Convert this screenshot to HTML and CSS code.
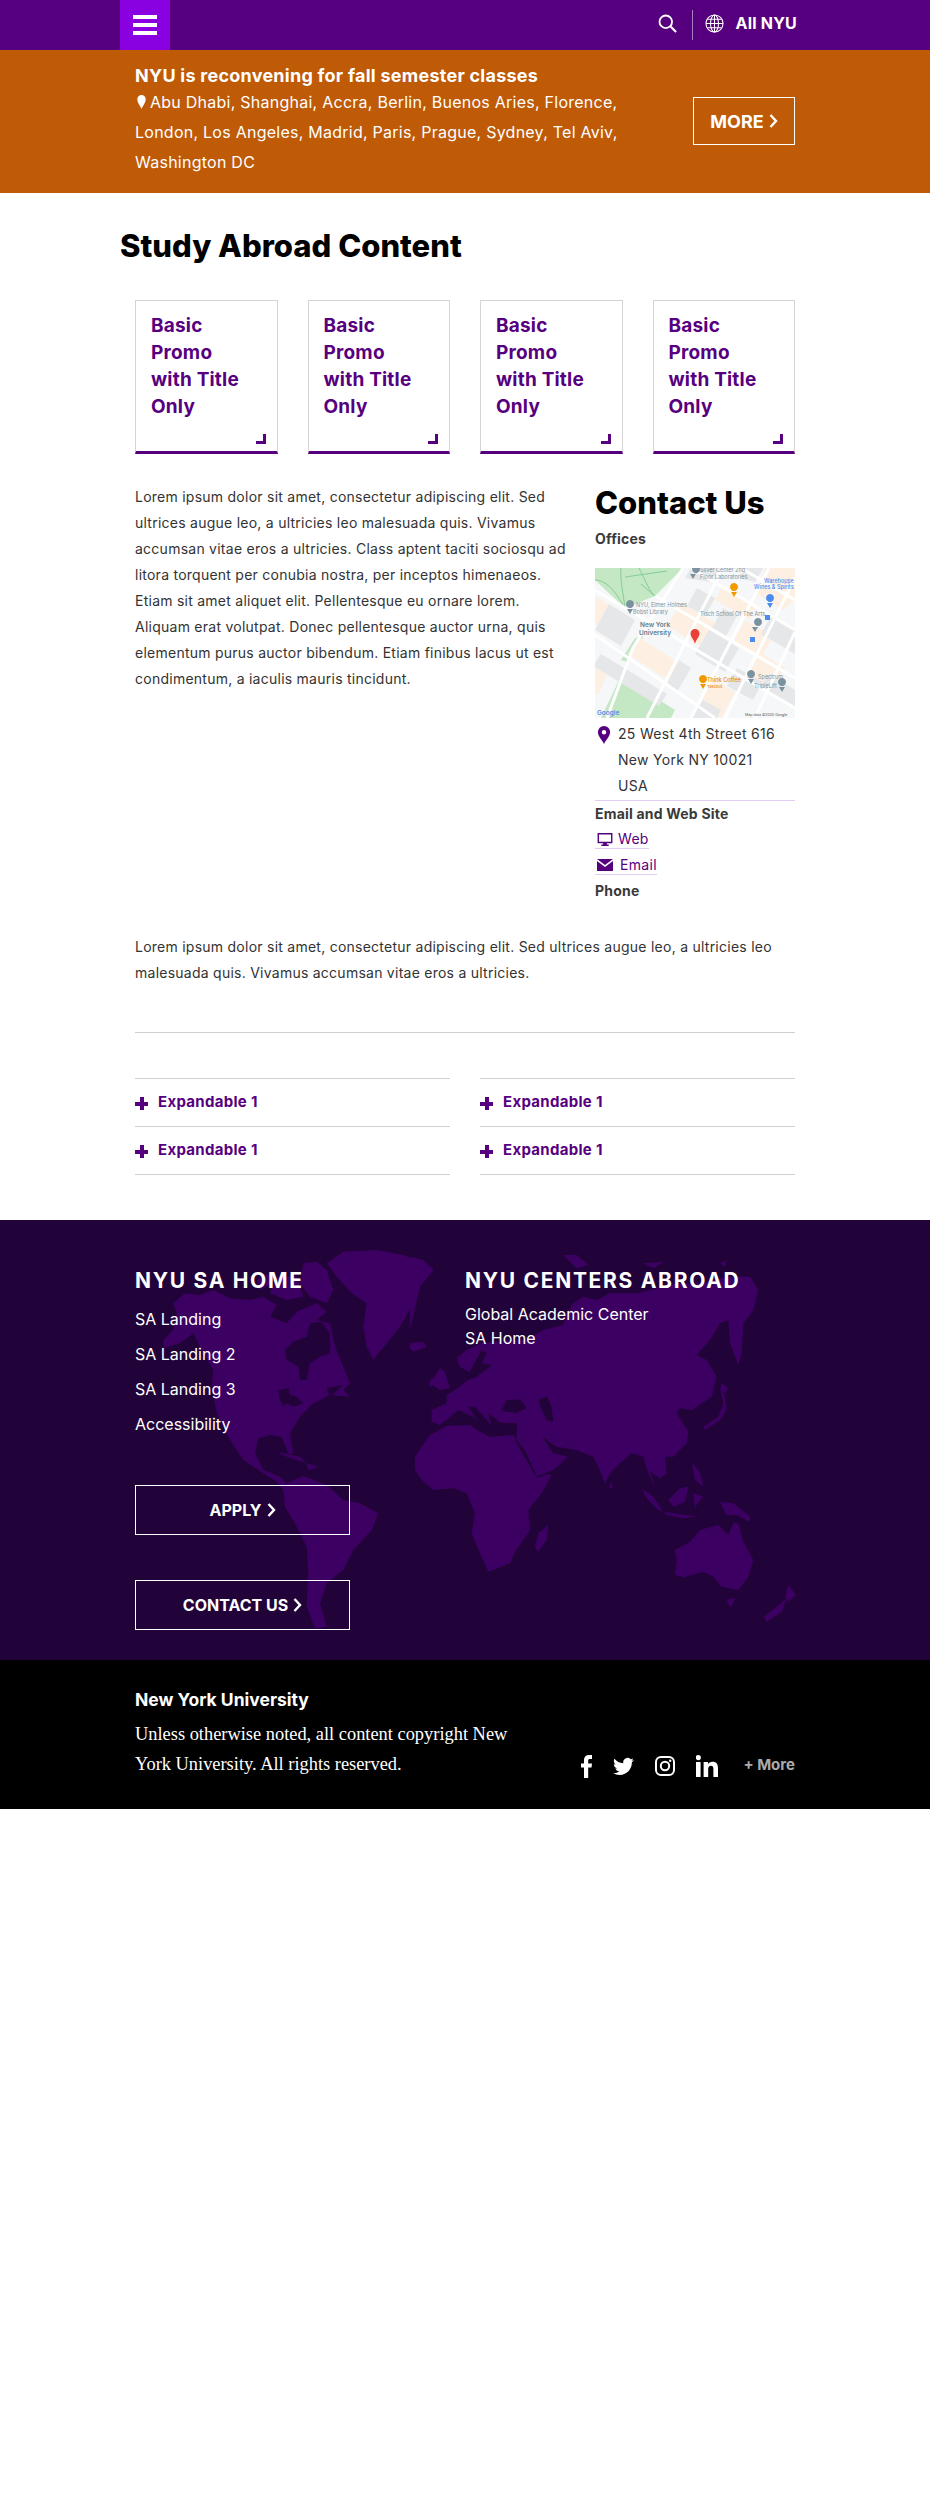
FILE: index.html
```html
<!DOCTYPE html>
<html lang="en">
<head>
<meta charset="utf-8">
<title>Study Abroad Content</title>
<link rel="stylesheet" href="styles.css">
</head>
<body>
<header class="topbar">
  <button class="menu-btn" aria-label="Menu"><span></span><span></span><span></span></button>
  <div class="top-right">
    <svg class="ico-search" viewBox="0 0 20 20"><circle cx="8.200" cy="8.200" r="6.600" fill="none" stroke="#fff" stroke-width="1.900"/><path d="M13 13l6 6" stroke="#fff" stroke-width="2.200" fill="none"/></svg>
    <span class="top-div"></span>
    <svg class="ico-globe" viewBox="0 0 20 20" fill="none" stroke="#fff" stroke-width="1.100"><circle cx="10" cy="10" r="9"/><ellipse cx="10" cy="10" rx="4.200" ry="9"/><path d="M10 1v18M1 10h18M2.400 5.500h15.200M2.400 14.500h15.200"/></svg>
    <span class="all-nyu">All NYU</span>
  </div>
</header>

<section class="alert">
  <div class="alert-text">
    <h2 class="alert-title">NYU is reconvening for fall semester classes</h2>
    <p class="alert-body"><svg class="alert-pin" viewBox="0 0 10 16"><path d="M5 0a4.800 4.800 0 0 0-4.800 4.900C.2 8.300 3.600 12.800 5 16c1.400-3.200 4.800-7.700 4.800-11.100A4.800 4.800 0 0 0 5 0z" fill="#fff"/></svg>Abu Dhabi, Shanghai, Accra, Berlin, Buenos Aries, Florence,<br>London, Los Angeles, Madrid, Paris, Prague, Sydney, Tel Aviv,<br>Washington DC</p>
  </div>
  <a class="btn more-btn">MORE <svg class="chev" viewBox="0 0 9 14"><path d="M1.500 1l5.500 6-5.500 6" fill="none" stroke="#fff" stroke-width="2.400"/></svg></a>
</section>

<main class="page">
  <h1 class="page-title">Study Abroad Content</h1>

  <div class="cards">
    <a class="card"><span class="card-title">Basic<br>Promo<br>with Title<br>Only</span><i class="corner"></i></a>
    <a class="card"><span class="card-title">Basic<br>Promo<br>with Title<br>Only</span><i class="corner"></i></a>
    <a class="card"><span class="card-title">Basic<br>Promo<br>with Title<br>Only</span><i class="corner"></i></a>
    <a class="card"><span class="card-title">Basic<br>Promo<br>with Title<br>Only</span><i class="corner"></i></a>
  </div>

  <div class="content-row">
    <p class="para">Lorem ipsum dolor sit amet, consectetur adipiscing elit. Sed<br>ultrices augue leo, a ultricies leo malesuada quis. Vivamus<br>accumsan vitae eros a ultricies. Class aptent taciti sociosqu ad<br>litora torquent per conubia nostra, per inceptos himenaeos.<br>Etiam sit amet aliquet elit. Pellentesque eu ornare lorem.<br>Aliquam erat volutpat. Donec pellentesque auctor urna, quis<br>elementum purus auctor bibendum. Etiam finibus lacus ut est<br>condimentum, a iaculis mauris tincidunt.</p>
    <aside class="contact">
      <h2 class="contact-title">Contact Us</h2>
      <h3 class="contact-label offices">Offices</h3>
      <svg class="map" viewBox="0 0 200 150">
        <rect width="200" height="150" fill="#f6f7f8"/>
        <path d="M0 0H88L60 28 30 40 0 12z" fill="#c4e8c4"/>
        <path d="M48 68l-2 8-14 18-6-2 14-22z" fill="#c4e8c4"/>
        <path d="M6 150l20-42 54 34-4 8z" fill="#c4e8c4"/>
        <path d="M0 12c14 0 24 18 30 28M44 0c6 12 12 26 16 28M30 9l42-6M26 0c-1 12 2 24 4 40M46 16l14 12" fill="none" stroke="#7fc88f" stroke-width=".9"/>
        <g fill="#fdf0e2">
          <path d="M0 28l14 8-10 20H0z"/><path d="M45 70l44 28-10 18-46-30z"/><path d="M86 34l36 22-14 24-36-22z"/><path d="M128 18l34 20-8 14-34-20z"/>
          <path d="M150 52l28 16-12 22-28-16z"/><path d="M170 0h30v32l-12 10-26-16z"/><path d="M116 110l24 14-14 26h-26z"/><path d="M164 84l26 16-14 24-26-16z"/><path d="M0 100l12 6-8 20H0z"/>
        </g>
        <g fill="#e6e7e9">
          <path d="M14 36l26 16-14 26-26-16z"/><path d="M96 0h28l-8 14-26-4z"/><path d="M102 20l18 10-10 18-18-10z"/><path d="M128 40l14 8-12 22-14-8z"/>
          <path d="M114 62l30 18-14 24-30-18z"/><path d="M150 0h18l-8 14-16-4z"/><path d="M6 86l66 40-8 12-66-40z"/><path d="M84 92l12 8-14 24-10-8z"/>
          <path d="M142 100l26 14-10 18-26-14z"/><path d="M174 106l26 16v18l-36-20z"/><path d="M108 132l18 10-4 8H96z"/><path d="M176 48l24 14v24l-34-20z"/>
        </g>
        <g fill="none" stroke="#fff" stroke-width="3">
          <path d="M-4 20L210 146M-4 64L120 150M60 28L200 110M96 0L200 62M146 0L200 32"/>
          <path d="M88 0L38 80 12 150M128 0L52 150M174 0L96 150M200 10L130 150M200 64L160 150"/>
        </g>
        <g fill="#7b93a0" font-family="Inter, sans-serif">
          <path d="M31 36a4 4 0 1 1 0 .1zM35 46l-3-5h6z"/>
          <path d="M97 1a4 4 0 1 1 0 .1zM98 11l-3-5h6z"/>
          <path d="M159 54a4 4 0 1 1 0 .1zM160 64l-3-5h6z"/>
          <path d="M152 106a4 4 0 1 1 0 .1zM156 116l-3-5h6z"/>
          <path d="M183 114a4 4 0 1 1 0 .1zM187 124l-3-5h6z"/>
          <text x="105" y="4" font-size="5.500">Silver Center 2nd</text>
          <text x="105" y="11" font-size="5.500">Floor Laboratories</text>
          <text x="41" y="39" font-size="5.500">NYU, Elmer Holmes</text>
          <text x="38" y="46" font-size="5.500">Bobst Library</text>
          <text x="105" y="48" font-size="5.500">Tisch School Of The Arts</text>
          <text x="163" y="111" font-size="5.500">Spectrum</text>
          <text x="159" y="120" font-size="5.500">TripleLift</text>
          <text x="45" y="59" font-size="6.500" font-weight="600" fill="#5f7d8d">New York</text>
          <text x="44" y="67" font-size="6.500" font-weight="600" fill="#5f7d8d">University</text>
        </g>
        <g fill="#4a8cf0" font-family="Inter, sans-serif" font-size="5.500" font-weight="500">
          <text x="169" y="15">Warehouse</text>
          <text x="159" y="21">Wines &amp; Spirits</text>
          <path d="M171 30a4 4 0 1 1 0 .1zM175 40l-3-5h6z"/>
          <rect x="170" y="47" width="5" height="5"/>
          <rect x="155" y="69" width="5" height="5"/>
        </g>
        <g fill="#f29900" font-family="Inter, sans-serif" font-size="5.500" font-weight="500">
          <path d="M135 19a4 4 0 1 1 0 .1zM139 29l-3-5h6z"/>
          <path d="M104 111a4 4 0 1 1 0 .1zM108 121l-3-5h6z"/>
          <text x="112" y="114" fill="#e8890c">Think Coffee</text>
          <text x="112" y="120" font-size="4" fill="#e8890c">Takeout</text>
        </g>
        <path d="M100 61a4.500 4.500 0 0 0-4.500 4.500c0 3.500 3 5 4.500 10.500 1.500-5.500 4.500-7 4.500-10.500A4.500 4.500 0 0 0 100 61z" fill="#e8403a"/>
        <text x="2" y="147" font-size="6.500" font-weight="600" fill="#5a8ee8" font-family="Inter, sans-serif">Google</text>
        <text x="150" y="148" font-size="3.600" fill="#555" font-family="Inter, sans-serif">Map data ©2020 Google</text>
      </svg>
      <div class="address">
        <svg class="addr-pin" viewBox="0 0 12 16"><path fill-rule="evenodd" d="M6 0a5.400 5.400 0 0 0-5.400 5.500C.6 9 4.500 12.500 6 16c1.500-3.500 5.400-7 5.400-10.500A5.400 5.400 0 0 0 6 0zm0 3.600a2 2 0 1 1 0 4 2 2 0 0 1 0-4z" fill="#57007f"/></svg>
        <p>25 West 4th Street 616<br>New York NY 10021<br>USA</p>
      </div>
      <h3 class="contact-label">Email and Web Site</h3>
      <a class="contact-link web"><svg class="link-ico" viewBox="0 0 16 14"><path fill="#57007f" d="M0 0h16v11H10v1.500h2V14H4v-1.500h2V11H0zm1.500 1.500v8h13v-8z"/></svg>Web</a>
      <a class="contact-link mail"><svg class="link-ico" viewBox="0 0 16 12"><path fill="#57007f" d="M0 0h16L8 6zM0 2l8 6 8-6v10H0z"/></svg>Email</a>
      <h3 class="contact-label phone">Phone</h3>
    </aside>
  </div>

  <p class="para para-two">Lorem ipsum dolor sit amet, consectetur adipiscing elit. Sed ultrices augue leo, a ultricies leo<br>malesuada quis. Vivamus accumsan vitae eros a ultricies.</p>

  <hr class="rule">

  <div class="accordions">
    <div class="acc-col">
      <div class="acc-row"><i class="plus"></i>Expandable 1</div>
      <div class="acc-row"><i class="plus"></i>Expandable 1</div>
    </div>
    <div class="acc-col">
      <div class="acc-row"><i class="plus"></i>Expandable 1</div>
      <div class="acc-row"><i class="plus"></i>Expandable 1</div>
    </div>
  </div>
</main>

<section class="foot-nav">
  <svg class="worldmap" viewBox="0 0 930 440" aria-hidden="true">
    <g transform="translate(130 20) scale(.33333)" fill="#3c0062">
      <path d="M100 300L130 270 140 220 130 190 165 160 210 165 250 150 300 175 360 180 400 170 440 195 420 230 470 250 500 215 560 190 590 215 560 240 600 250 615 320 660 430 640 450 660 470 600 465 550 490 510 530 480 580 490 640 475 640 455 590 420 585 385 595 375 640 400 690 450 710 470 730 520 708 590 735 640 780 690 790 745 820 725 870 670 930 640 990 590 1030 570 1090 590 1160 555 1165 530 1100 535 1000 530 920 500 860 465 800 460 750 440 725 400 700 340 660 300 600 260 520 245 440 250 390 215 330 190 280 150 310 100 325z"/>
      <path d="M520 70L560 65 590 90 610 150 590 190 540 170 510 130zM440 110L500 110 520 170 470 180 420 160zM380 120L420 100 430 130 390 150z"/>
      <path d="M590 70L640 35 740 30 820 45 910 85 870 130 850 190 810 260 770 310 730 360 710 320 700 260 710 190 665 160 620 110z"/>
      <path d="M440 635L510 650 530 670 470 650zM530 670L565 680 535 690z"/>
      <path d="M838 320L880 305 890 320 850 335z"/>
    </g>
    <g transform="translate(130 20) scale(.33333)" fill="#220339">
      <path d="M465 330L490 305 530 290 540 250 575 245 600 280 600 340 570 350 540 370 530 420 510 420 505 380 470 360z"/>
      <path d="M445 450L475 445 480 465 500 470 520 490 490 500 470 490 460 500 450 480zM590 445L640 435 600 470z"/>
    </g>
    <g transform="translate(410 20) scale(.33333)" fill="#3c0062">
      <path d="M15 650L60 585 110 558 180 555 200 570 240 590 310 585 345 650 375 700 425 705 395 760 355 810 360 870 315 935 300 970 235 995 210 940 185 880 195 820 170 760 130 745 70 750 35 720 15 690z"/>
      <path d="M415 855L410 900 385 935 375 920 385 880z"/>
      <path d="M65 545L65 510 110 490 110 465 135 450 175 420 200 410 175 395 150 380 140 355 170 330 210 310 260 305 300 300 350 300 400 270 460 255 470 220 490 190 520 170 560 180 600 160 680 160 720 150 800 130 880 130 950 110 1020 110 1045 150 1030 210 1000 250 995 340 985 375 960 310 955 240 930 250 900 300 860 345 890 360 920 410 905 470 860 500 850 510 810 505 800 520 835 575 830 610 790 650 765 650 770 700 750 715 720 695 735 745 715 700 700 650 665 640 630 670 600 700 585 730 565 680 550 650 500 630 470 625 440 620 400 595 430 640 475 650 430 690 380 710 350 640 320 600 320 570 322 550 270 548 250 530 235 520 245 560 230 540 195 500 175 500 205 545 190 530 145 510 115 535 90 555z"/>
      <path d="M795 930L840 905 870 870 925 855 955 885 970 850 985 850 1000 905 1030 960 1015 1010 985 1050 935 1040 910 1010 880 995 820 1012 795 1005 800 960z"/>
      <path d="M950 1078L975 1075 965 1100 955 1095z"/>
      <path d="M1135 1035L1158 1065 1135 1085 1125 1070zM1100 1100L1130 1075 1115 1115 1070 1145 1062 1130z"/>
      <path d="M880 560L925 530 940 490 930 445 945 470 950 510 930 540 885 570zM935 430L955 445 945 460 930 450z"/>
      <path d="M695 745L730 770 760 815 745 810 710 775zM760 815L860 830 820 835 770 825z"/>
      <path d="M775 780L810 745 835 740 825 785 790 800z"/>
      <path d="M850 760L880 770 865 785 855 805z"/>
      <path d="M930 785L970 790 1020 830 1020 845 980 825 950 825z"/>
      <path d="M845 665L870 700 880 740 855 720z"/>
      <path d="M600 725L610 740 600 745z"/>
      <path d="M60 430L90 385 105 395 120 445 90 450zM60 420L75 410 70 435 58 440z"/>
      <path d="M0 310L40 305 48 320 15 332 0 328zM0 50L40 60 70 90 30 140 0 270z"/>
      <path d="M460 45L500 45 535 75 500 85zM700 70L760 65 730 85zM930 70L950 60 945 80z"/>
    </g>
    <g transform="translate(410 20) scale(.33333)" fill="#220339">
      <path d="M275 510L290 480 330 478 350 505 320 518 285 515z"/>
      <path d="M385 480L410 470 425 500 430 545 410 540 395 510z"/>
      <path d="M170 410L215 330 230 340 215 370 245 375 195 415z"/>
    </g>
    <g transform="translate(410 20) scale(.33333)" fill="none" stroke="#220339" stroke-width="5">
      <path d="M318 600L378 705M380 712L432 692M400 595L440 625 470 640"/>
    </g>
  </svg>
  <div class="foot-cols">
    <div>
      <h3 class="foot-head">NYU SA HOME</h3>
      <ul class="foot-links wide">
        <li>SA Landing</li><li>SA Landing 2</li><li>SA Landing 3</li><li>Accessibility</li>
      </ul>
      <a class="btn foot-btn first">APPLY <svg class="chev" viewBox="0 0 9 14"><path d="M1.500 1l5.500 6-5.500 6" fill="none" stroke="#fff" stroke-width="2.400"/></svg></a>
      <a class="btn foot-btn">CONTACT US <svg class="chev" viewBox="0 0 9 14"><path d="M1.500 1l5.500 6-5.500 6" fill="none" stroke="#fff" stroke-width="2.400"/></svg></a>
    </div>
    <div>
      <h3 class="foot-head">NYU CENTERS ABROAD</h3>
      <ul class="foot-links">
        <li>Global Academic Center</li><li>SA Home</li>
      </ul>
    </div>
  </div>
</section>

<footer class="legal">
  <div class="legal-text">
    <h4 class="legal-title">New York University</h4>
    <p class="legal-copy">Unless otherwise noted, all content copyright New<br>York University. All rights reserved.</p>
  </div>
  <div class="social">
    <svg class="s-fb" viewBox="0 0 11 23"><path fill="#fff" d="M3 23V12.500H0V8.500h3V5.500C3 1.800 5 0 8.200 0H11v4H9C7.700 4 7.200 4.600 7.200 5.800v2.700H11l-.5 4H7.200V23z"/></svg>
    <svg class="s-tw" viewBox="0 0 24 24"><path fill="#fff" d="M23.953 4.570a10 10 0 0 1-2.825.775 4.958 4.958 0 0 0 2.163-2.723c-.951.555-2.005.959-3.127 1.184a4.920 4.920 0 0 0-8.384 4.482C7.690 8.095 4.067 6.130 1.640 3.162a4.822 4.822 0 0 0-.666 2.475c0 1.710.870 3.213 2.188 4.096a4.904 4.904 0 0 1-2.228-.616v.060a4.923 4.923 0 0 0 3.946 4.827 4.996 4.996 0 0 1-2.212.085 4.936 4.936 0 0 0 4.604 3.417 9.867 9.867 0 0 1-6.102 2.105c-.390 0-.779-.023-1.170-.067a13.995 13.995 0 0 0 7.557 2.209c9.053 0 13.998-7.496 13.998-13.985 0-.210 0-.420-.015-.630A9.935 9.935 0 0 0 24 4.590z"/></svg>
    <svg class="s-ig" viewBox="0 0 20 20" fill="none" stroke="#fff"><rect x="1" y="1" width="18" height="18" rx="5" stroke-width="2"/><circle cx="10" cy="10" r="4.200" stroke-width="2"/><circle cx="15.200" cy="4.800" r="1.200" fill="#fff" stroke="none"/></svg>
    <svg class="s-in" viewBox="0 0 22 22"><path fill="#fff" d="M0 7h4.600v15H0zM2.300 0a2.600 2.600 0 1 1 0 5.200 2.600 2.600 0 0 1 0-5.200zM7.600 7H12v2.100C12.700 7.800 14.300 6.700 16.500 6.700 20.700 6.700 22 9.300 22 13.300V22h-4.600v-7.800c0-2-.5-3.500-2.400-3.500-2 0-2.800 1.500-2.800 3.500V22H7.600z"/></svg>
    <span class="s-more">+ More</span>
  </div>
</footer>
</body>
</html>
```
FILE: styles.css
```css
* { box-sizing: border-box; }
html, body { margin: 0; padding: 0; }
body { font-family: Inter, "Liberation Sans", sans-serif; color: #333; background: #fff; min-height: 2500px; }
a { color: inherit; text-decoration: none; }
h1, h2, h3, h4, p, ul { margin: 0; padding: 0; }
ul { list-style: none; }

.topbar { height: 50px; background: #57007f; padding: 0 133px 0 120px; display: flex; justify-content: space-between; }
.menu-btn { width: 50px; height: 50px; background: #8900e1; border: 0; padding: 0 13px; display: flex; flex-direction: column; justify-content: center; gap: 4px; }
.menu-btn span { display: block; height: 4px; width: 24px; background: #fff; }
.top-right { display: flex; align-items: center; color: #fff; height: 46px; }
.ico-search { width: 19px; height: 19px; margin-top: 1px; }
.top-div { width: 1px; height: 30px; background: #a67fc0; margin: 4px 12px 0 15px; }
.ico-globe { width: 19px; height: 19px; margin: 1px 12px 0 0; }
.all-nyu { font-size: 16px; font-weight: 700; letter-spacing: .2px; }

.alert { height: 143px; background: #bf5a07; color: #fff; padding: 14px 135px 16px; display: flex; justify-content: space-between; align-items: flex-start; }
.alert-title { font-size: 18px; line-height: 23px; font-weight: 700; letter-spacing: .25px; white-space: nowrap; }
.alert-body { font-size: 16px; line-height: 30px; font-weight: 400; letter-spacing: .25px; white-space: nowrap; }
.alert-pin { width: 9px; height: 14px; margin: 0 4px 0 2px; vertical-align: -1px; }
.btn { display: flex; align-items: center; justify-content: center; gap: 5px; border: 1px solid #fff; color: #fff; font-weight: 700; }
.more-btn { width: 102px; height: 48px; margin-top: 33px; font-size: 18px; }
.chev { width: 9px; height: 14px; }

.page { padding: 0 135px; }
.page-title { font-size: 31px; line-height: 40px; font-weight: 800; color: #000; margin: 33px 0 34px -15px; }
.cards { display: grid; grid-template-columns: repeat(4, 1fr); gap: 30px; }
.card { position: relative; height: 154px; border: 1px solid #d4d4d4; border-bottom: 3px solid #57007f; padding: 11px 15px 0; }
.card-title { display: block; font-size: 19px; line-height: 27px; font-weight: 700; letter-spacing: .2px; color: #57007f; }
.corner { position: absolute; right: 11px; bottom: 7px; width: 10px; height: 10px; border-right: 3px solid #57007f; border-bottom: 3px solid #57007f; }

.content-row { display: flex; justify-content: space-between; padding-top: 30px; }
.para { font-size: 14px; line-height: 26px; color: #333; letter-spacing: .25px; white-space: nowrap; }
.contact { width: 200px; margin-top: -1px; font-size: 14px; }
.contact-title { font-size: 31px; line-height: 40px; font-weight: 800; color: #000; margin-bottom: 3px; white-space: nowrap; }
.contact-label { font-size: 14px; line-height: 26px; font-weight: 700; color: #3a3a3a; letter-spacing: .2px; }
.offices { margin-bottom: 16px; }
.map { display: block; width: 200px; height: 150px; }
.address { display: flex; gap: 5px; margin-top: 3px; padding-bottom: 1px; border-bottom: 1px solid #e0cdf0; line-height: 26px; white-space: nowrap; }
.addr-pin { width: 14px; height: 18px; margin: 5px 2px 0 2px; flex: none; }
.address p { color: #333; letter-spacing: .3px; }
.contact-link { display: flex; align-items: center; width: fit-content; line-height: 18px; color: #57007f; border-bottom: 1px solid #e0cdf0; margin-top: 3px; letter-spacing: .3px; }
.contact-link.mail { margin-top: 7px; }
.link-ico { width: 16px; height: 13px; margin: 0 5px 0 2px; }
.mail .link-ico { height: 12px; margin-right: 7px; }
.phone { margin-top: 3px; }

.para-two { margin-top: 30px; }
.rule { border: 0; border-top: 1px solid #d0d0d0; margin: 46px 0 45px; }
.accordions { display: grid; grid-template-columns: 1fr 1fr; gap: 30px; margin-bottom: 45px; }
.acc-col { border-top: 1px solid #d0d0d0; }
.acc-row { height: 48px; padding-bottom: 2px; border-bottom: 1px solid #d0d0d0; display: flex; align-items: center; gap: 10px; font-size: 15px; font-weight: 700; letter-spacing: .3px; color: #57007f; }
.plus { position: relative; width: 13px; height: 13px; flex: none; margin-top: 3px; }
.plus::before, .plus::after { content: ""; position: absolute; background: #57007f; }
.plus::before { left: 0; right: 0; top: 5px; height: 4px; }
.plus::after { top: 0; bottom: 0; left: 5px; width: 4px; }

.foot-nav { position: relative; height: 440px; background: #220339; color: #fff; padding: 46px 135px 0; }
.worldmap { position: absolute; left: 0; top: 0; width: 930px; height: 440px; }
.foot-cols { position: relative; display: grid; grid-template-columns: 330px 1fr; }
.foot-head { font-size: 21px; line-height: 30px; font-weight: 700; letter-spacing: 1.7px; white-space: nowrap; }
.foot-links { margin-top: 6px; font-size: 16px; line-height: 24px; }
.foot-links.wide { line-height: 35px; margin-bottom: 43px; }
.foot-btn { width: 215px; height: 50px; font-size: 16px; }
.foot-btn.first { margin-bottom: 45px; }

.legal { height: 149px; background: #000; color: #fff; padding: 28px 135px 30px; display: flex; justify-content: space-between; align-items: flex-end; }
.legal-title { font-size: 17.500px; line-height: 24px; font-weight: 700; margin-bottom: 7px; }
.legal-copy { font-family: "Liberation Serif", serif; font-size: 18.400px; line-height: 30px; white-space: nowrap; }
.social { display: flex; align-items: center; gap: 21px; height: 30px; }
.s-fb { width: 11px; height: 23px; margin-top: 4px; }
.s-tw { width: 21px; height: 21px; margin-top: 4px; }
.s-ig { width: 20px; height: 20px; margin-top: 3px; }
.s-in { width: 22px; height: 22px; margin-top: 4px; }
.s-more { font-size: 15px; font-weight: 700; color: #aaa; margin-left: 4px; }
```
